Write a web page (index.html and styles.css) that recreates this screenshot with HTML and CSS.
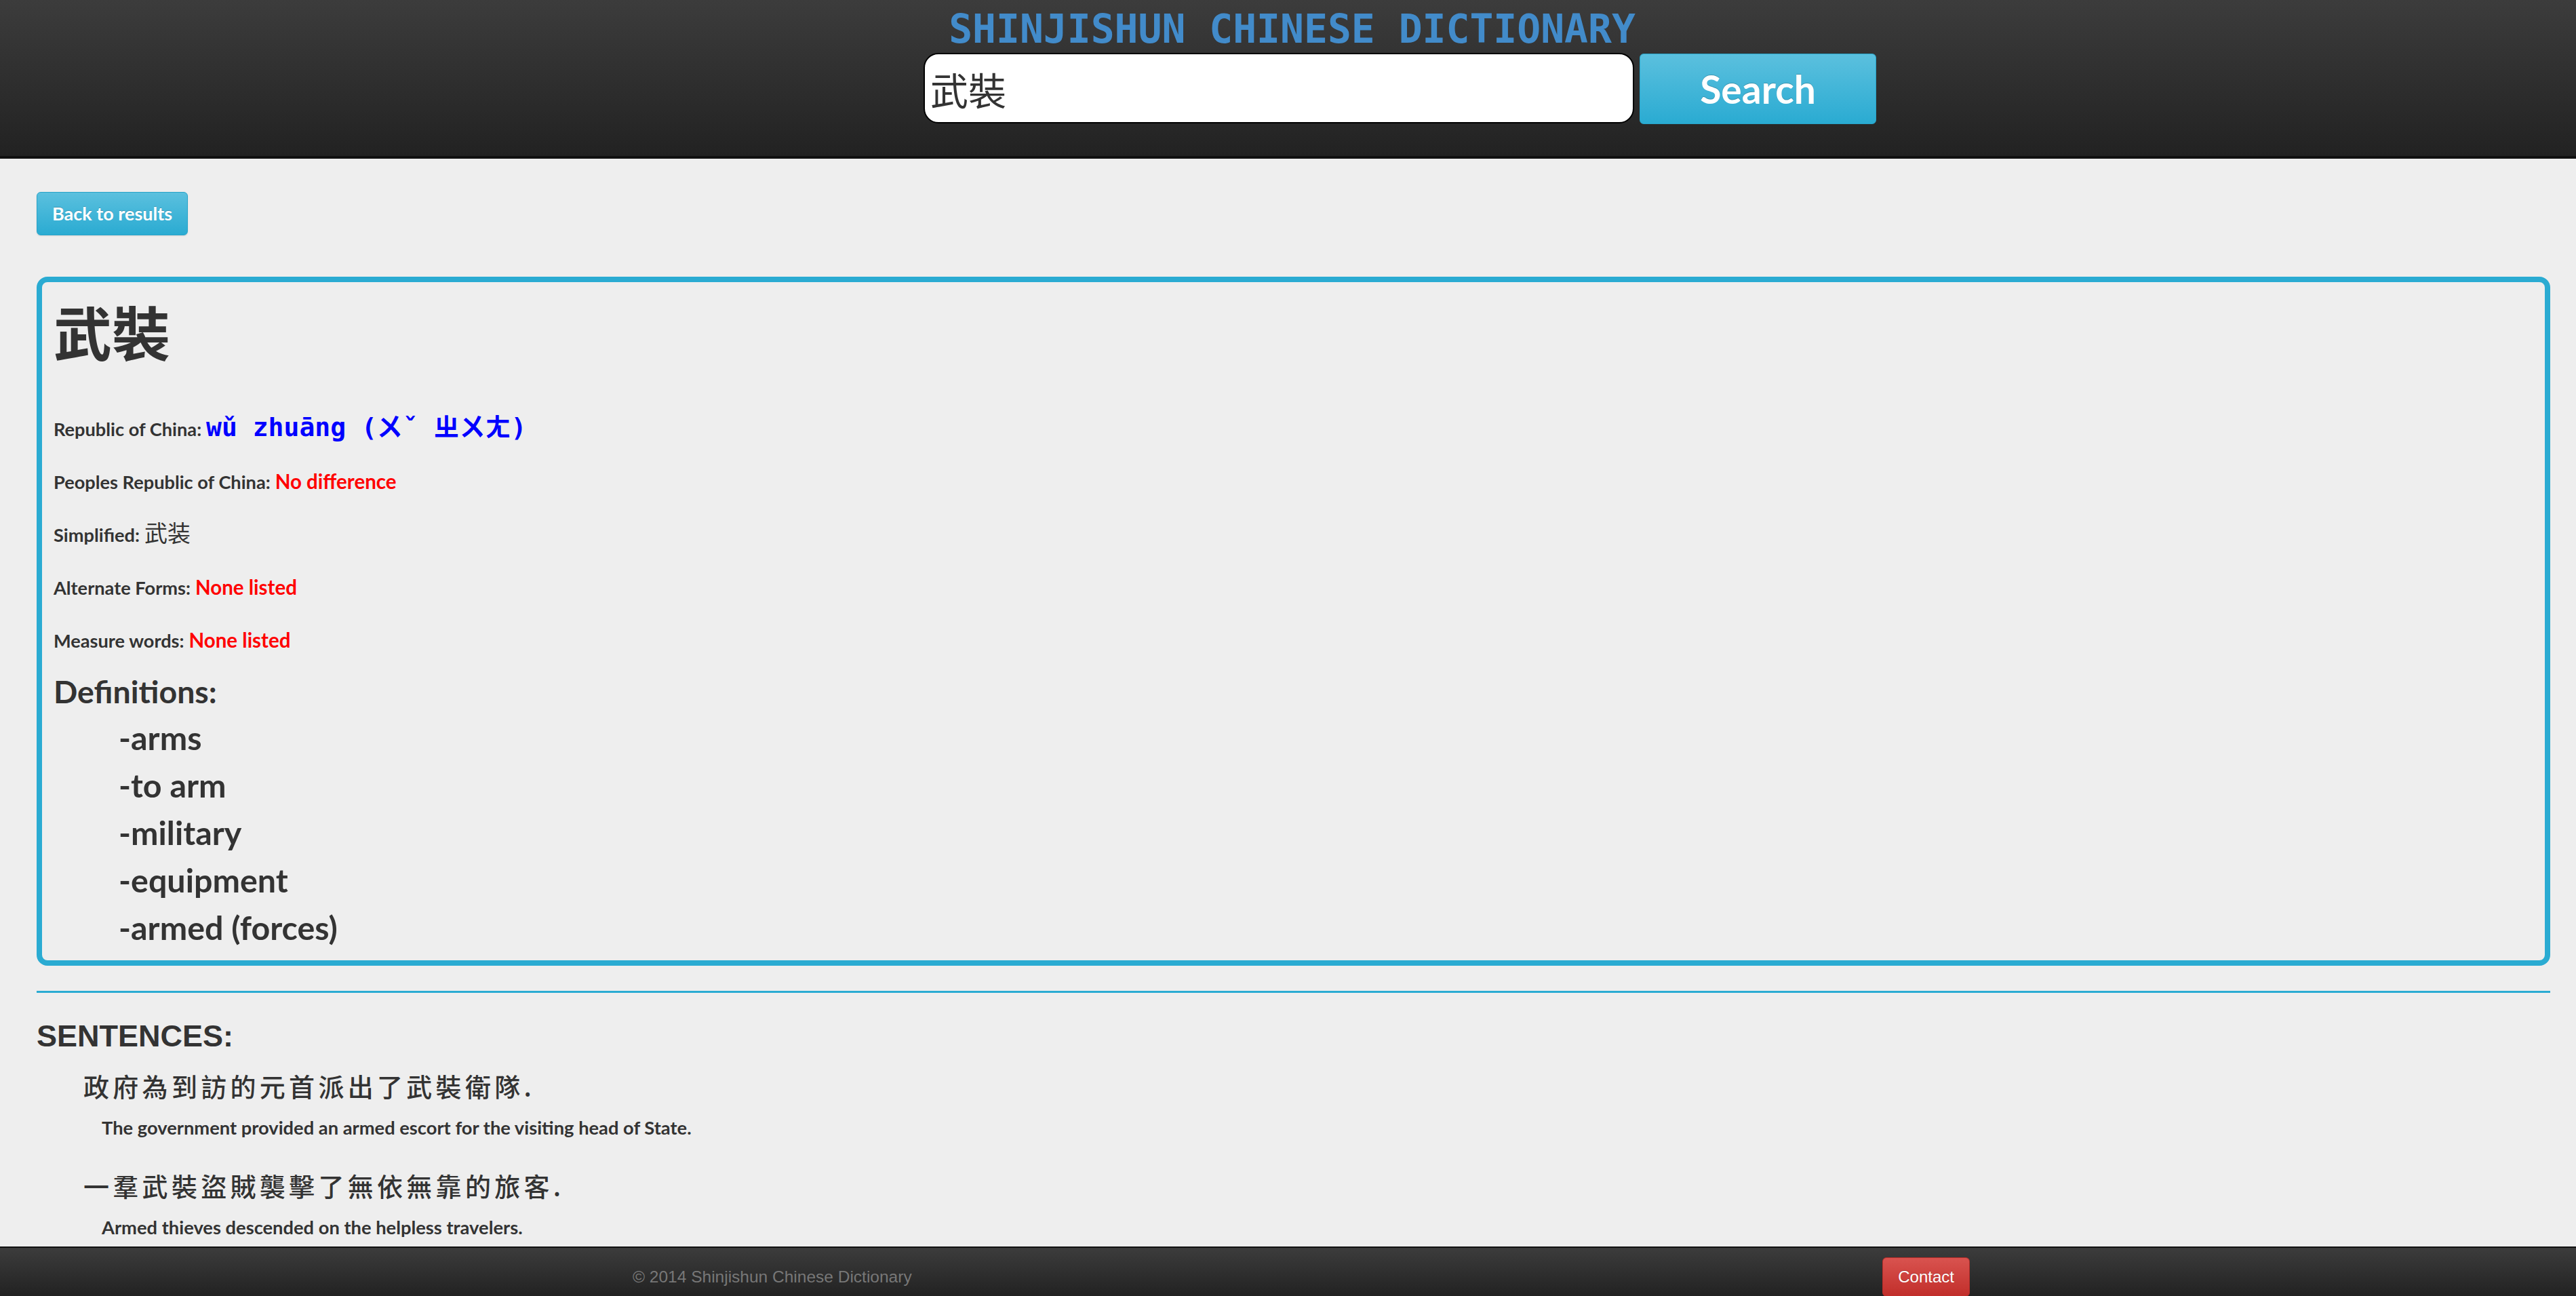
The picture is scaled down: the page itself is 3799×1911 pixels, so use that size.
FILE: index.html
```html
<!DOCTYPE html>
<html lang="zh-Hant">
<head>
<meta charset="utf-8">
<title>武裝 - Shinjishun Chinese Dictionary</title>
<link rel="stylesheet" href="styles.css">
</head>
<body>
<header class="site-header">
  <h1 class="site-title">SHINJISHUN CHINESE DICTIONARY</h1>
  <form class="search-form">
    <input class="search-input" type="text" value="武裝">
    <button class="search-btn" type="button">Search</button>
  </form>
</header>
<main class="page">
  <a class="btn-back" href="#">Back to results</a>
  <section class="entry-card">
    <h2 class="entry-word">武裝</h2>
    <div class="entry-rows">
      <div class="entry-row"><span class="label">Republic of China:</span> <span class="pinyin">wǔ zhuāng (ㄨˇ ㄓㄨㄤ)</span></div>
      <div class="entry-row"><span class="label">Peoples Republic of China:</span> <span class="none">No difference</span></div>
      <div class="entry-row"><span class="label">Simplified:</span> <span class="simplified">武装</span></div>
      <div class="entry-row"><span class="label">Alternate Forms:</span> <span class="none">None listed</span></div>
      <div class="entry-row"><span class="label">Measure words:</span> <span class="none">None listed</span></div>
    </div>
    <h3 class="def-title">Definitions:</h3>
    <ul class="def-list">
      <li>-arms</li>
      <li>-to arm</li>
      <li>-military</li>
      <li>-equipment</li>
      <li>-armed (forces)</li>
    </ul>
  </section>
  <hr class="divider">
  <section class="sentences">
    <h3 class="sentences-title">SENTENCES:</h3>
    <div class="sentence">
      <p class="sentence-zh">政府為到訪的元首派出了武裝衛隊.</p>
      <p class="sentence-en">The government provided an armed escort for the visiting head of State.</p>
    </div>
    <div class="sentence">
      <p class="sentence-zh">一羣武裝盜賊襲擊了無依無靠的旅客.</p>
      <p class="sentence-en">Armed thieves descended on the helpless travelers.</p>
    </div>
  </section>
</main>
<footer class="site-footer">
  <span class="copyright">© 2014 Shinjishun Chinese Dictionary</span>
  <a class="btn-contact" href="#">Contact</a>
</footer>
</body>
</html>
```

FILE: styles.css
```css
html, body {
  margin: 0;
  padding: 0;
}

body {
  background: #eeeeee;
  color: #333333;
  font-family: Lato, "Noto Sans CJK TC", sans-serif;
}

/* ---------- header ---------- */
.site-header {
  height: 230px;
  background: linear-gradient(#3c3c3c, #222222);
  border-bottom: 4px solid #111111;
  display: flex;
  flex-direction: column;
}

.site-title {
  margin: 14px 0 0;
  padding-left: 12px;
  text-align: center;
  font-family: "DejaVu Sans Mono", monospace;
  font-weight: bold;
  font-size: 58px;
  line-height: 58px;
  color: #428bca;
}

.search-form {
  display: flex;
  align-items: flex-start;
  gap: 8px;
  margin: 6px 0 0 1362px;
}

.search-input {
  box-sizing: border-box;
  width: 1048px;
  height: 104px;
  margin: 0;
  padding: 0 8px;
  border: 2px solid #000000;
  border-radius: 22px;
  background: #ffffff;
  color: #333333;
  font-family: "Noto Sans CJK TC", sans-serif;
  font-size: 56px;
  outline: none;
}

.search-btn {
  box-sizing: border-box;
  width: 349px;
  height: 104px;
  margin: 1px 0 0;
  padding: 0;
  border: 1px solid #28a4c9;
  border-radius: 6px;
  background: linear-gradient(#5bc0de, #2aabd2);
  color: #ffffff;
  font-family: Lato, sans-serif;
  font-weight: bold;
  font-size: 57px;
  line-height: 102px;
  text-shadow: 0 -1px 0 rgba(0, 0, 0, 0.2);
}

/* ---------- main ---------- */
.page {
  padding: 49px 38px 140px 54px;
}

.btn-back {
  display: block;
  width: fit-content;
  padding: 11px 22px;
  border: 1px solid #28a4c9;
  border-radius: 6px;
  background: linear-gradient(#5bc0de, #2aabd2);
  color: #ffffff;
  font-weight: bold;
  font-size: 27px;
  line-height: 40px;
  text-decoration: none;
  text-shadow: 0 -1px 0 rgba(0, 0, 0, 0.2);
  box-shadow: 0 1px 2px rgba(0, 0, 0, 0.12);
}

.entry-card {
  margin-top: 61px;
  padding: 20px 17px 14px;
  border: 8px solid #2aabd2;
  border-radius: 16px;
}

.entry-word {
  margin: 0;
  font-family: "Noto Sans CJK TC", sans-serif;
  font-weight: bold;
  font-size: 86px;
  line-height: 103px;
  color: #333333;
}

.entry-rows {
  margin-top: 55px;
}

.entry-row {
  font-size: 27.2px;
  line-height: 78px;
  white-space: nowrap;
}

.label {
  font-weight: bold;
  color: #333333;
}

.pinyin {
  font-family: "DejaVu Sans Mono", "Noto Sans CJK TC", monospace;
  font-weight: bold;
  font-size: 38px;
  line-height: 1;
  color: #0000ff;
}

.none {
  font-weight: bold;
  font-size: 29.5px;
  line-height: 1;
  color: #ff0000;
}

.simplified {
  font-family: "Noto Sans CJK SC", sans-serif;
  font-size: 34px;
  line-height: 1;
  color: #333333;
}

.def-title {
  margin: 2px 0 0;
  font-weight: bold;
  font-size: 46.5px;
  line-height: 66px;
}

.def-list {
  list-style: none;
  margin: 0;
  padding: 0 0 0 96px;
}

.def-list li {
  font-weight: bold;
  font-size: 48.4px;
  line-height: 70px;
}

.divider {
  height: 3px;
  margin: 37px 0 0;
  border: none;
  background: #2aabd2;
}

/* ---------- sentences ---------- */
.sentences-title {
  margin: 39px 0 0;
  font-family: "Liberation Sans", Arial, sans-serif;
  font-weight: bold;
  font-size: 45px;
  line-height: 50px;
  color: #333333;
}

.sentence {
  margin-top: 40px;
}

.sentence:first-of-type {
  margin-top: 23px;
}

.sentence-zh {
  margin: 0;
  padding-left: 69px;
  font-family: "Noto Sans CJK TC", sans-serif;
  font-weight: 500;
  font-size: 38px;
  line-height: 50px;
  letter-spacing: 5.3px;
  color: #333333;
}

.sentence-en {
  margin: 17px 0 0;
  padding-left: 96px;
  font-weight: bold;
  font-size: 27.3px;
  line-height: 40px;
  color: #333333;
}

/* ---------- footer ---------- */
.site-footer {
  position: fixed;
  left: 0;
  right: 0;
  bottom: 0;
  height: 73px;
  box-sizing: border-box;
  display: flex;
  justify-content: space-between;
  align-items: flex-start;
  padding: 14px 894px 0 933px;
  border-top: 2px solid #111111;
  background: linear-gradient(#3c3c3c, #222222);
  font-family: "Liberation Sans", Arial, sans-serif;
}

.copyright {
  margin-top: 12px;
  font-size: 24.5px;
  line-height: 34px;
  color: #777777;
}

.btn-contact {
  padding: 11px 22px;
  border: 1px solid #b92c28;
  border-radius: 6px;
  background: linear-gradient(#d9534f, #c12e2a);
  color: #ffffff;
  font-size: 24px;
  line-height: 34px;
  text-decoration: none;
  text-shadow: 0 -1px 0 rgba(0, 0, 0, 0.2);
}
```
